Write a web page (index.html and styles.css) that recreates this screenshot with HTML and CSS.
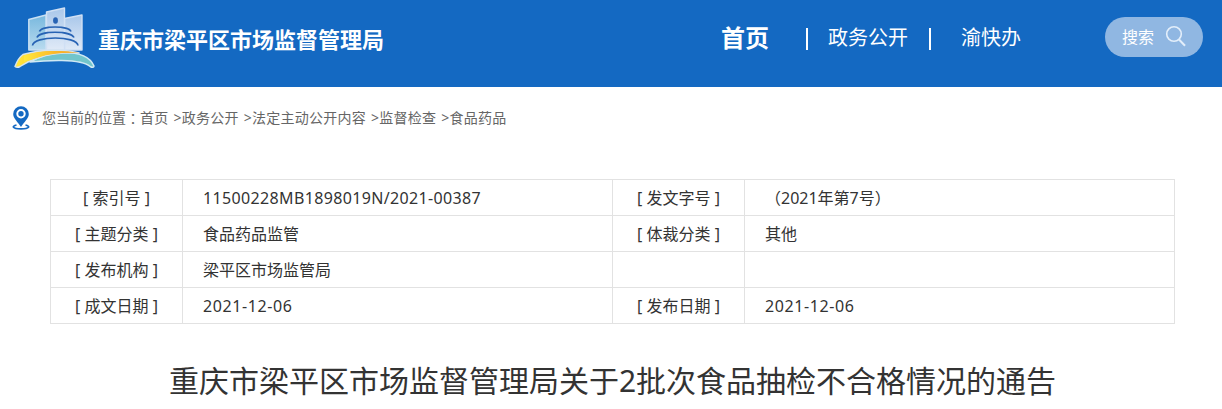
FILE: index.html
```html
<!DOCTYPE html>
<html lang="zh-CN">
<head>
  <meta charset="UTF-8" />
  <meta name="viewport" content="width=device-width, initial-scale=1.0" />
  <title>重庆市梁平区市场监督管理局</title>
  <link rel="stylesheet" href="styles.css">
</head>
<body>
  <header class="header">
    <a class="logo">
      <svg class="logo-icon" width="84" height="66" viewBox="12 5 84 66">
        <defs>
          <linearGradient id="tower" x1="0" y1="0" x2="0" y2="1">
            <stop offset="0" stop-color="#a9c7ea" />
            <stop offset="1" stop-color="#e0eaf7" />
          </linearGradient>
          <linearGradient id="left" x1="0" y1="0" x2="0" y2="1">
            <stop offset="0" stop-color="#78b8de" />
            <stop offset="1" stop-color="#b9dbef" />
          </linearGradient>
          <linearGradient id="road">
            <stop offset="0" stop-color="#ffe83c" />
            <stop offset="0.55" stop-color="#fcb92a" />
            <stop offset="1" stop-color="#f6a01a" />
          </linearGradient>
        </defs>
        <path d="M28.800 19.500L46 15V50H28.800Z" fill="url(#left)" stroke="#c9e0f3" stroke-width="1.400" stroke-linejoin="round" />
        <path d="M64.500 18.500L82 15V50H64.500Z" fill="url(#tower)" stroke="#d0e0f4" stroke-width="1.400" stroke-linejoin="round" />
        <path d="M46.500 12L64.500 8V50H46.500Z" fill="url(#tower)" stroke="#d0e0f4" stroke-width="1.400" stroke-linejoin="round" />
        <ellipse cx="55.500" cy="20.500" rx="2.400" ry="3.200" fill="#2863b4" />
        <g fill="none" stroke="#2863b4" stroke-width="1.700">
          <path d="M39.500 31.500C41 25.500 69 25.500 71 31.500" />
          <path d="M37 37.500C39 30.500 71 30.500 74 37.500" />
          <path d="M32.500 45.500C33.500 35.500 77 35.500 78 45.500" />
        </g>
        <path d="M30 62Q43 54 62 52.500Q88 52 94 66Q93.500 68 90.500 66.800Q84 61 62 60.500Q45 60.300 30 62Z" fill="#72c5cb" stroke="#d0e9f4" stroke-width="1.500" stroke-linejoin="round" />
        <path d="M15 66.500Q18 58 23 54.500Q38 50 55 50.200Q70 50.500 79 53Q55 52 38 58Q28 61 20 66.500Q17 68 15 66.500Z" fill="url(#road)" stroke="#d5e4ee" stroke-width="1.500" stroke-linejoin="round" />
        <path d="M24 55.500Q38 51 55 51Q70 51 79 53Q55 52 38 57.500L24 62Z" fill="url(#road)" />
      </svg>
      <span class="logo-text">重庆市梁平区市场监督管理局</span>
    </a>
    <nav class="nav">
      <a class="nav-home">首页</a>
      <i class="nav-line"></i>
      <a>政务公开</a>
      <i class="nav-line"></i>
      <a class="nav-last">渝快办</a>
    </nav>
    <div class="search">
      <span>搜索</span>
      <svg width="22" height="22" viewBox="0 0 22 22" fill="none" stroke="#e3eefa" stroke-width="1.600">
        <circle cx="9" cy="9" r="7.300" />
        <path d="M14 14.500L20 20.800" stroke-width="2" />
      </svg>
    </div>
  </header>

  <div class="location">
    <svg class="location-icon" width="18" height="24" viewBox="0 0 18 24">
      <path d="M4.500 19C-0.500 20 0 22.900 9 22.900S18.500 20 13.500 19" fill="none" stroke="#1469c2" stroke-width="1.600" />
      <path fill="#1469c2" fill-rule="evenodd" d="M9 .2A7.800 7.800 0 0 0 1.200 8C1.200 12.500 6 16 9 21C12 16 16.800 12.500 16.800 8A7.800 7.800 0 0 0 9 .2ZM9 3A4.700 4.700 0 1 1 9 12.400A4.700 4.700 0 0 1 9 3Z" />
      <circle cx="9" cy="7.700" r="2.700" fill="#1469c2" />
    </svg>
    <span>您当前的位置</span>
    <span class="full" lang="zh-TW">：</span>
    <a>首页</a>
    <a>&gt;政务公开</a>
    <a>&gt;法定主动公开内容</a>
    <a>&gt;监督检查</a>
    <a>&gt;食品药品</a>
  </div>

  <main>
    <table class="info">
      <tr>
        <th>[ 索引号 ]</th>
        <td class="index-no">11500228MB1898019N/2021-00387</td>
        <th>[ 发文字号 ]</th>
        <td><span class="full" lang="zh-TW">（</span>2021年第7号<span class="full" lang="zh-TW">）</span></td>
      </tr>
      <tr>
        <th>[ 主题分类 ]</th>
        <td>食品药品监管</td>
        <th>[ 体裁分类 ]</th>
        <td>其他</td>
      </tr>
      <tr>
        <th>[ 发布机构 ]</th>
        <td>梁平区市场监管局</td>
        <th></th>
        <td></td>
      </tr>
      <tr>
        <th>[ 成文日期 ]</th>
        <td class="date">2021-12-06</td>
        <th>[ 发布日期 ]</th>
        <td class="date">2021-12-06</td>
      </tr>
    </table>
    <h1 class="title">重庆市梁平区市场监督管理局关于2批次食品抽检不合格情况的通告</h1>
  </main>
</body>
</html>
```
FILE: styles.css
```css
* {
  box-sizing: border-box;
}
body {
  margin: 0;
  background: #fff;
  color: #333;
  font-family: "Noto Sans", "Noto Sans CJK SC", sans-serif;
  font-size: 16px;
  overflow: hidden;
}
.header {
  display: flex;
  height: 87px;
  padding: 0 19px 0 12px;
  background: #1469c2;
  color: #fff;
}
.logo {
  display: flex;
  width: 709px;
}
.logo-icon {
  margin-top: 5px;
}
.logo-text {
  margin-left: 2px;
  font-size: 22px;
  font-weight: bold;
  line-height: 78px;
}
.nav {
  display: flex;
  flex: 1;
  font-size: 20px;
  line-height: 76px;
}
.nav-home {
  width: 85px;
  font-size: 24px;
  font-weight: bold;
}
.nav-line {
  width: 2px;
  height: 22px;
  margin: 28px 20px 0 0;
  background: #fff;
}
.nav-line + a {
  width: 101px;
}
.nav .nav-last {
  width: auto;
  margin-left: 10px;
}
.search {
  display: flex;
  align-items: center;
  width: 98px;
  height: 40px;
  margin-top: 17px;
  padding-left: 17px;
  border-radius: 20px;
  background: #90b7e2;
}
.search span {
  margin-top: -2px;
}
.search svg {
  margin: -3px 0 0 11px;
}
.location {
  display: flex;
  height: 92px;
  padding: 19px 0 0 12px;
  color: #666;
  font-size: 14px;
  line-height: 24px;
}
.location-icon {
  margin-right: 12px;
}
.location a {
  margin-right: 5px;
  letter-spacing: 0.25px;
}
.full {
  font-family: "Noto Sans CJK TC", sans-serif;
}
.info {
  width: 1125px;
  margin: 0 0 0 50px;
  border-collapse: collapse;
  table-layout: fixed;
}
.info th,
.info td {
  height: 36px;
  padding: 0;
  border: 1px solid #e2e2e2;
  font-weight: normal;
  line-height: 24px;
}
.info th {
  width: 132px;
  text-align: center;
}
.info td {
  padding-left: 20px;
}
.info .full {
  line-height: 1;
}
.info .index-no {
  letter-spacing: 0.35px;
}
.info .date {
  letter-spacing: 0.6px;
}
.title {
  margin: 33px 0 0 3px;
  font-size: 30px;
  font-weight: normal;
  line-height: 48px;
  text-align: center;
}
```
